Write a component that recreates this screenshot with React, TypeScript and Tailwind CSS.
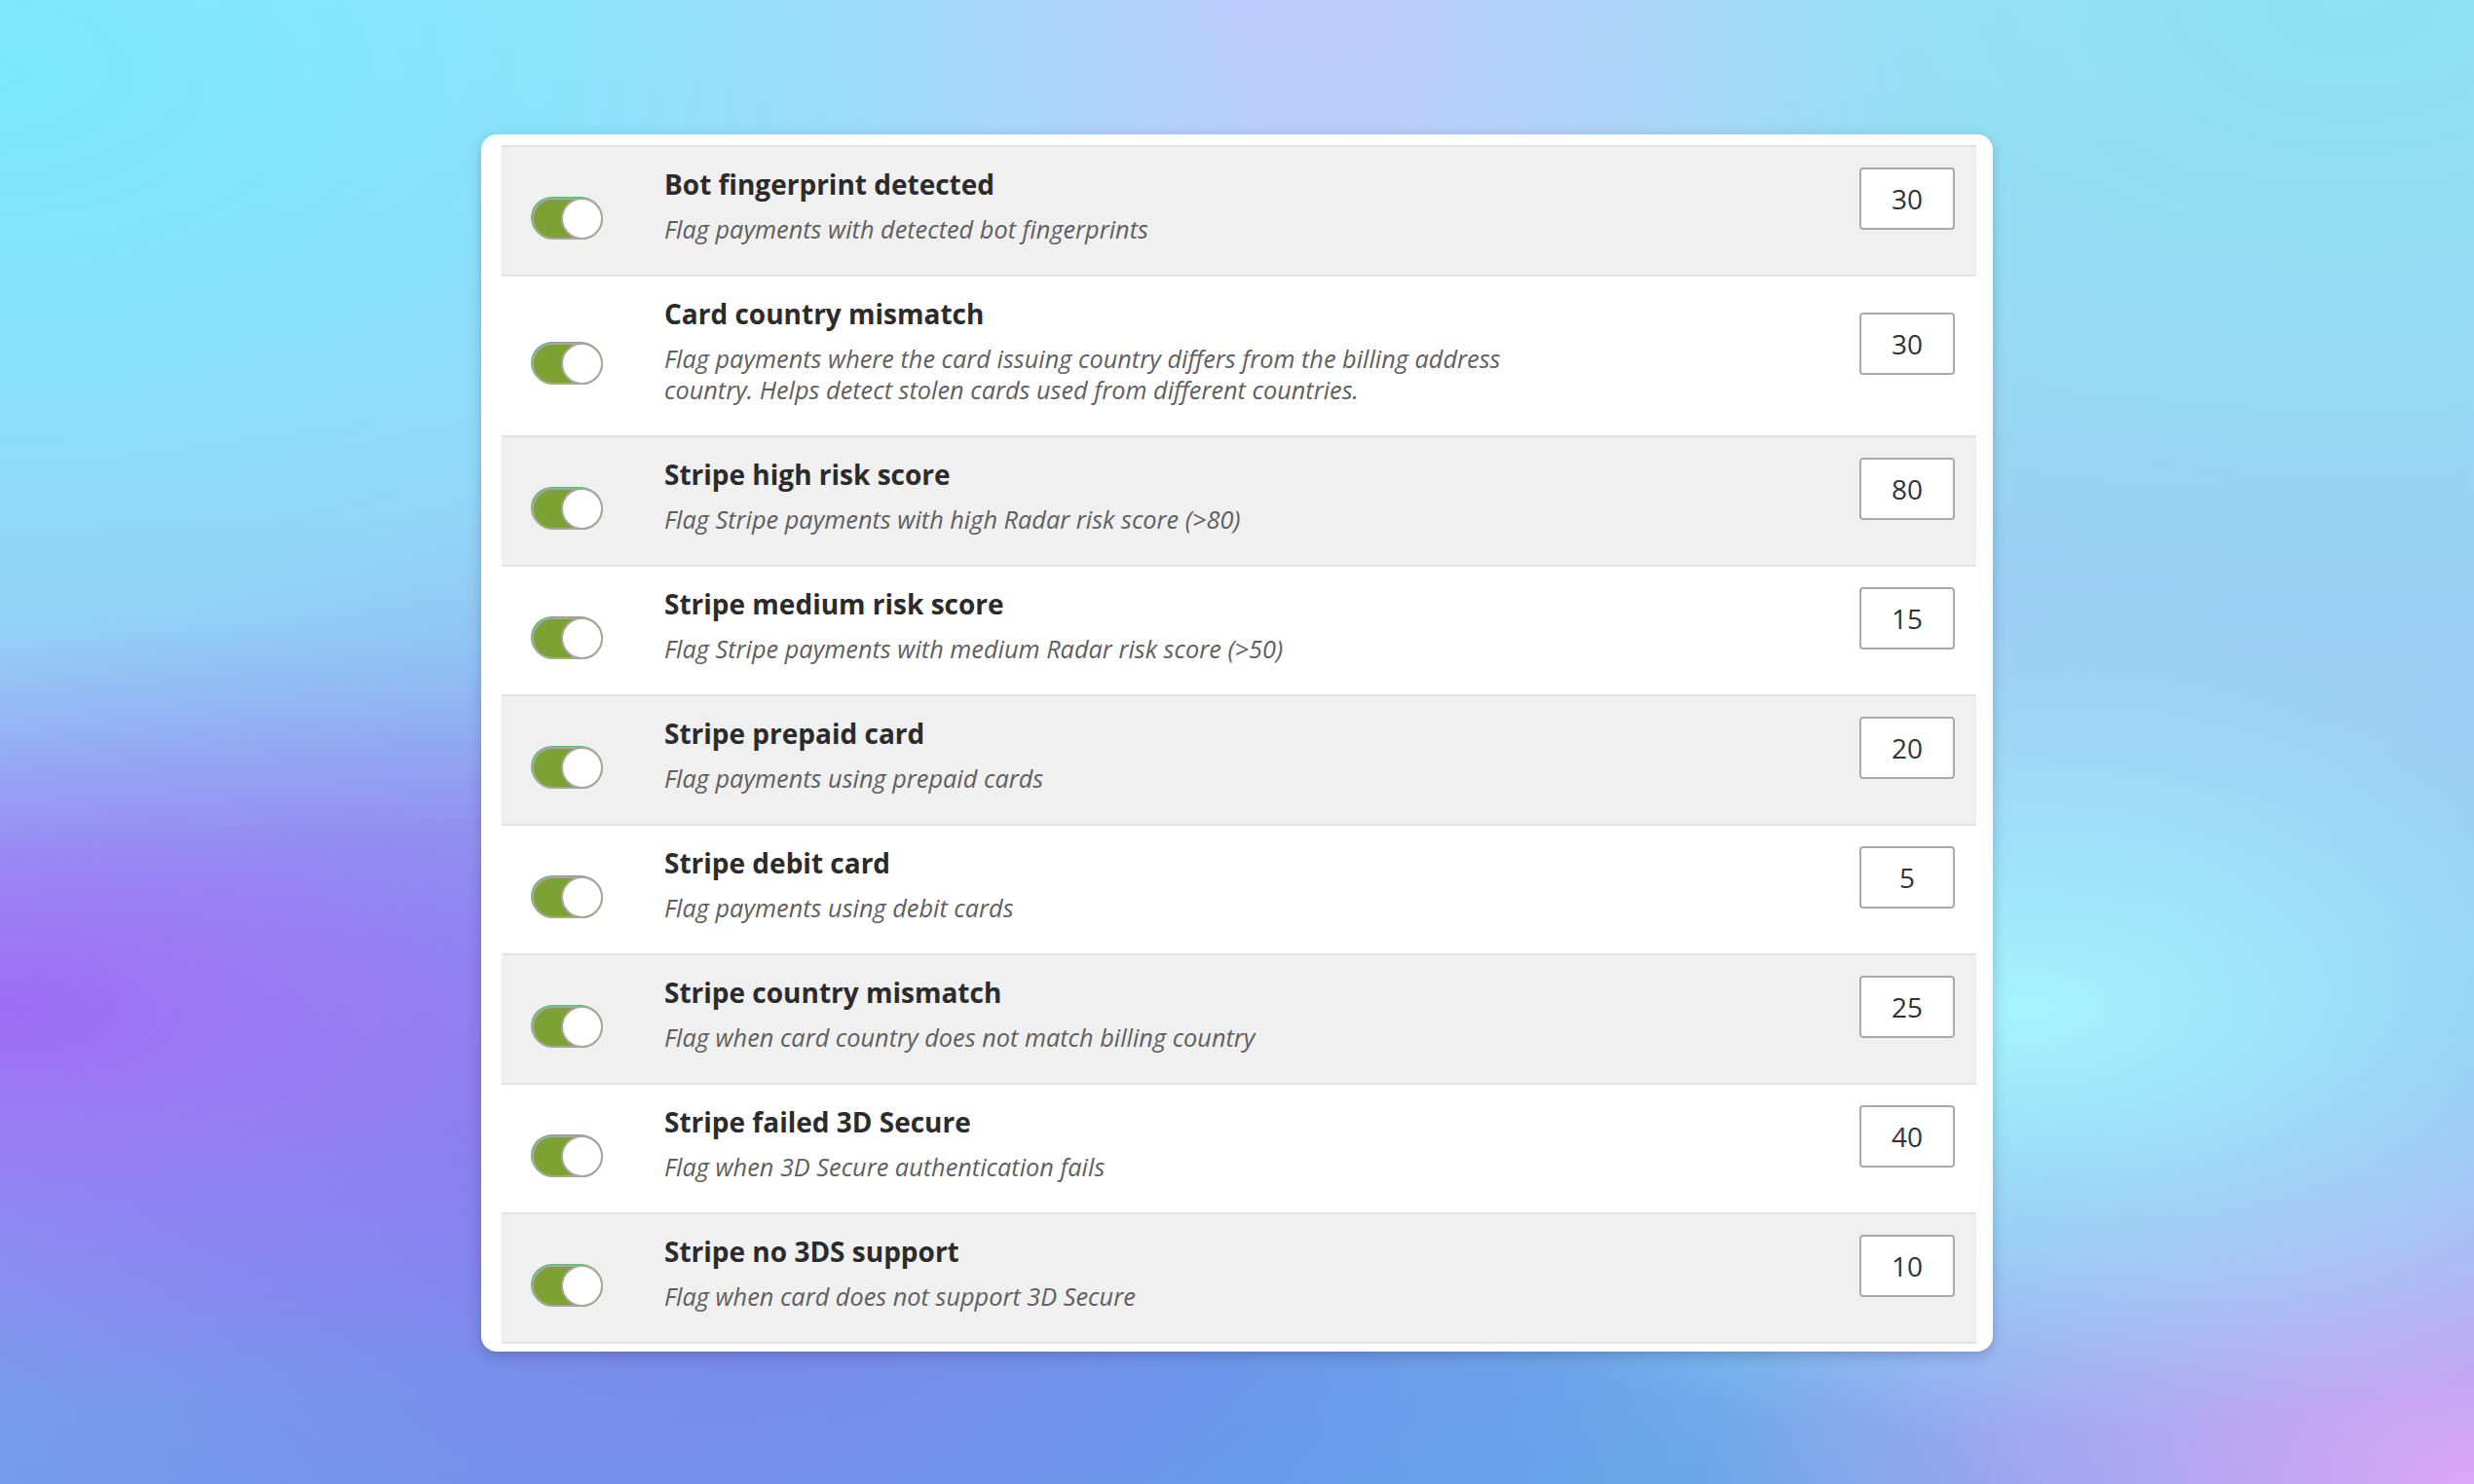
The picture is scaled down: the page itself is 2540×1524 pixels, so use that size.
import * as React from 'react'

type Rule = {
  title: string
  desc: string
  score: number
}

const rules: Rule[] = [
  { title: 'Bot fingerprint detected', desc: 'Flag payments with detected bot fingerprints', score: 30 },
  {
    title: 'Card country mismatch',
    desc: 'Flag payments where the card issuing country differs from the billing address country. Helps detect stolen cards used from different countries.',
    score: 30,
  },
  { title: 'Stripe high risk score', desc: 'Flag Stripe payments with high Radar risk score (>80)', score: 80 },
  { title: 'Stripe medium risk score', desc: 'Flag Stripe payments with medium Radar risk score (>50)', score: 15 },
  { title: 'Stripe prepaid card', desc: 'Flag payments using prepaid cards', score: 20 },
  { title: 'Stripe debit card', desc: 'Flag payments using debit cards', score: 5 },
  { title: 'Stripe country mismatch', desc: 'Flag when card country does not match billing country', score: 25 },
  { title: 'Stripe failed 3D Secure', desc: 'Flag when 3D Secure authentication fails', score: 40 },
  { title: 'Stripe no 3DS support', desc: 'Flag when card does not support 3D Secure', score: 10 },
]

function Toggle({ on, onChange }: { on: boolean; onChange: () => void }) {
  return (
    <button
      onClick={onChange}
      className={`relative mt-[17px] h-[43px] w-[73px] shrink-0 rounded-full border-2 border-[#a9a59f] shadow-[-1px_-1px_0_0_#5cbf6a] ${
        on ? 'bg-[#7ba233]' : 'bg-[#d5d5d5]'
      }`}
    >
      <span
        className={`absolute -top-[2px] h-[43px] w-[43px] rounded-full border-2 border-[#a9a59f] bg-white ${
          on ? '-right-[2px]' : '-left-[2px]'
        }`}
      />
    </button>
  )
}

export default function App() {
  const [enabled, setEnabled] = React.useState(rules.map(() => true))
  const [scores, setScores] = React.useState(rules.map((r) => String(r.score)))

  return (
    <div className="flex h-screen w-full justify-center bg-[#8fc4f4] bg-[image:radial-gradient(ellipse_at_0%_5%,#7de9fc_0%,transparent_40%),radial-gradient(ellipse_at_50%_0%,#c4c8fb_0%,transparent_38%),radial-gradient(ellipse_at_95%_0%,#8de3ef_0%,transparent_35%),radial-gradient(ellipse_at_0%_68%,#a06df5_0%,transparent_28%),radial-gradient(ellipse_at_28%_80%,#7b7fe9_0%,transparent_42%),radial-gradient(ellipse_at_82%_68%,#a6f4fc_0%,transparent_30%),radial-gradient(ellipse_at_100%_100%,#dba7f6_0%,transparent_22%),radial-gradient(ellipse_at_50%_100%,#5fa8e9_0%,transparent_40%),linear-gradient(180deg,#a6dcfa_0%,#9cc6f2_50%,#73a6ea_100%)] pt-[138px] font-['Open_Sans',sans-serif]">
      <div className="h-fit w-[1552px] rounded-[16px] bg-white pb-[8px] pl-[21px] pr-[17px] pt-[11px] shadow-[0_4px_14px_rgba(30,40,90,0.25)]">
        <div className="border-t-2 border-[#e2e2e2]">
          {rules.map((rule, i) => (
            <div
              key={rule.title}
              className={`flex items-center border-b-2 border-[#e2e2e2] pb-[19px] pl-[31px] pr-[22px] pt-[18px] ${
                i % 2 === 0 ? 'bg-[#f0f0f0]' : 'bg-white'
              }`}
            >
              <Toggle
                on={enabled[i]}
                onChange={() => setEnabled((prev) => prev.map((v, j) => (j === i ? !v : v)))}
              />
              <div className="mb-3 ml-[63px] flex-1">
                <div className="text-[28px] font-bold leading-[40px] text-[#2b2b2b]">{rule.title}</div>
                <p className="mt-[10px] max-w-[900px] text-[25.3px] italic leading-[32px] text-[#5f5f5f]">{rule.desc}</p>
              </div>
              <input
                type="text"
                value={scores[i]}
                onChange={(e) => {
                  const v = e.target.value
                  setScores((prev) => prev.map((s, j) => (j === i ? v : s)))
                }}
                className="mb-6 h-[64px] w-[98px] shrink-0 rounded-[4px] border-2 border-[#aaaaaa] bg-white text-center text-[28px] text-[#333] outline-none"
              />
            </div>
          ))}
        </div>
      </div>
    </div>
  )
}
